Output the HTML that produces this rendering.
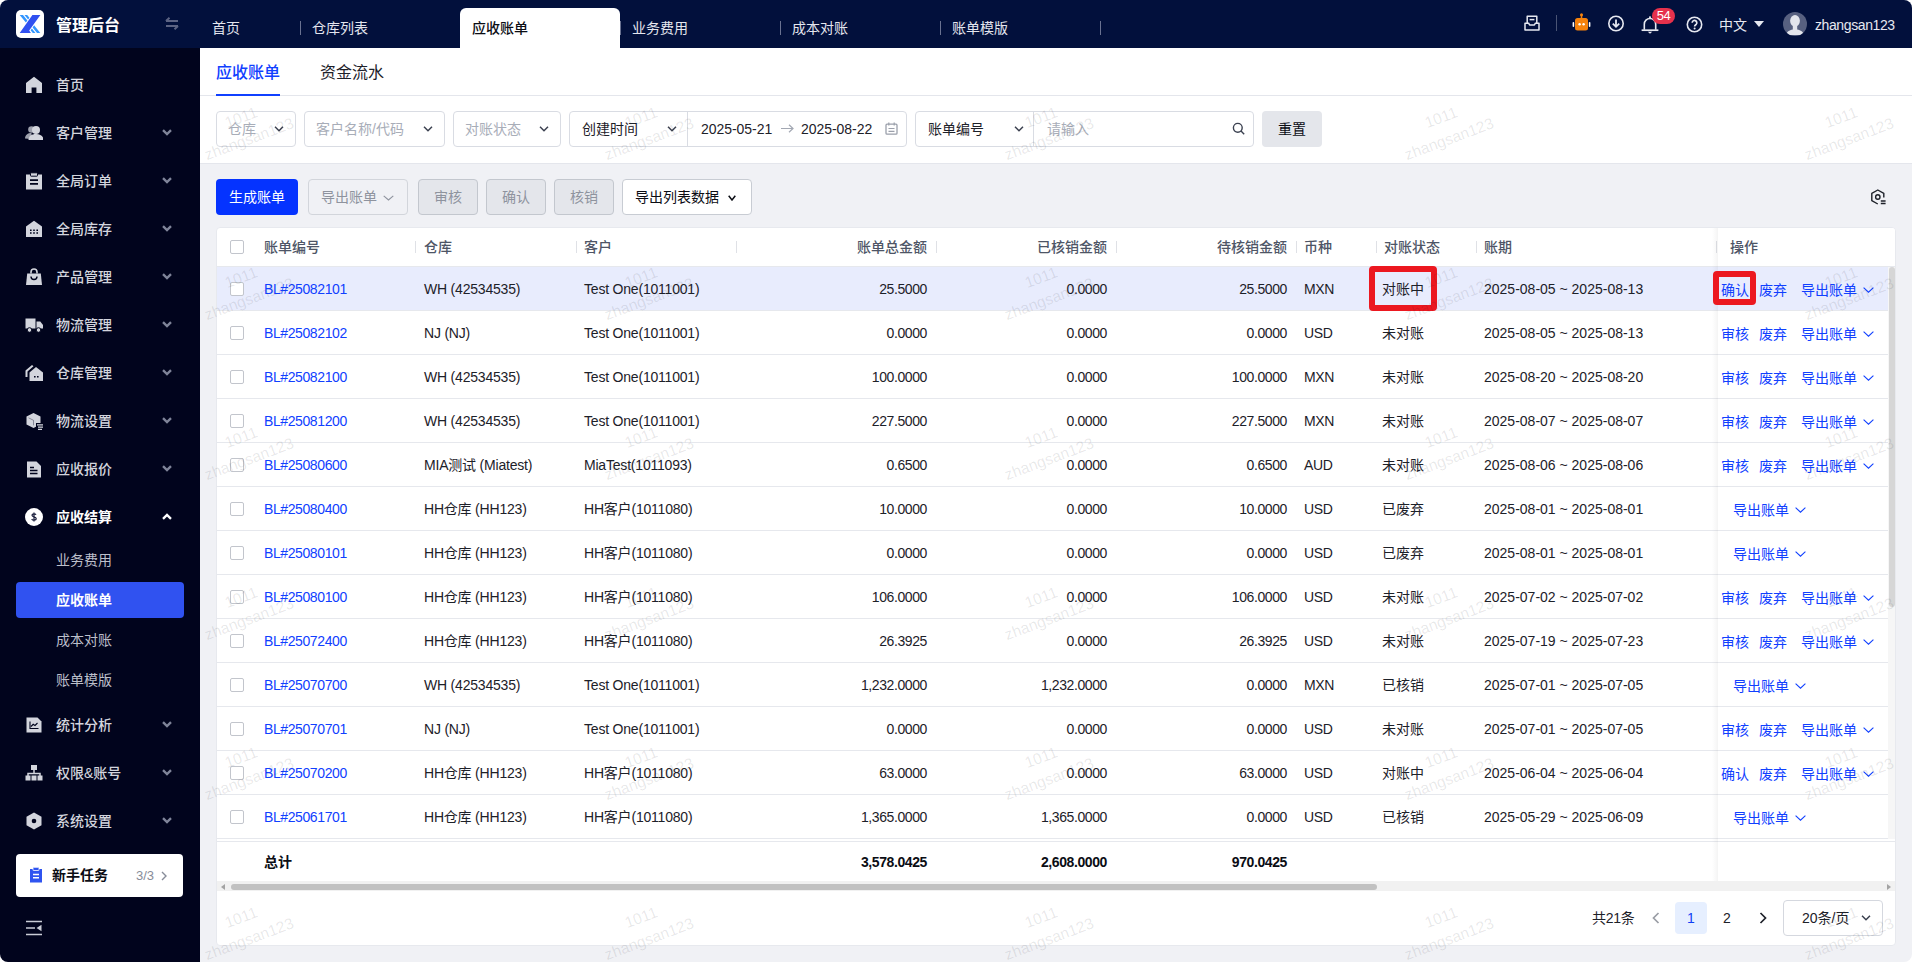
<!DOCTYPE html>
<html lang="zh-CN">
<head>
<meta charset="utf-8">
<title>应收账单</title>
<style>
*{box-sizing:border-box}
html,body{margin:0;padding:0;background:#fff}
body{width:1912px;height:962px;overflow:hidden}
#app{position:relative;width:1912px;height:962px;overflow:hidden;border-radius:8px;background:#f0f1f5;font-family:"Liberation Sans","Noto Sans CJK SC",sans-serif;font-size:14px;color:#1d2129;line-height:20px}
.abs{position:absolute}
svg{display:block}
/* header */
#hd{position:absolute;left:0;top:0;width:1912px;height:48px;background:#02103c}
#logo{position:absolute;left:16px;top:10px;width:28px;height:28px;border-radius:5px;background:#fff}
#brand{position:absolute;left:56px;top:15px;font-size:16px;font-weight:700;color:#fff;line-height:22px;letter-spacing:0}
.tab{position:absolute;top:8px;height:40px;line-height:40px;color:#e4e6ee;font-size:14px;padding-left:12px;white-space:nowrap}
.tab.on{background:#fff;color:#0b0d14;font-weight:500;border-radius:6px 6px 0 0}
.tsep{position:absolute;top:21px;width:1px;height:14px;background:#6a7291}
.hi{position:absolute;color:#e6e8f0}
/* sidebar */
#sb{position:absolute;left:0;top:48px;width:200px;height:914px;background:#01041d}
.mi{position:absolute;left:0;width:200px;height:48px;color:#d3d5dd;font-weight:500;font-size:14px}
.mi .tx{position:absolute;left:56px;top:14px;line-height:20px}
.mi .ic{position:absolute;left:25px;top:15px;width:18px;height:18px;color:#d3d5dd}
.mi .ar{position:absolute;left:162px;top:20px;color:#7f8499}
.mi.open{color:#fff;font-weight:700}
.mi.open .ar{color:#fff}
.si{position:absolute;left:16px;width:168px;height:36px;border-radius:4px;color:#bcbfca;font-weight:400}
.si .tx{position:absolute;left:40px;top:8px;line-height:20px}
.si.on{background:#3052f0;color:#fff;font-weight:700}
/* content */
#top{position:absolute;left:200px;top:48px;width:1712px;height:116px;background:#fff;border-bottom:1px solid #e4e6ec}
#top .line{position:absolute;left:0;top:47px;width:1712px;height:1px;background:#e4e6ec}
.st{position:absolute;top:14px;font-size:16px;line-height:22px;color:#1d2129}
.st.on{color:#1040ff;font-weight:500}
.sel{position:absolute;top:63px;height:36px;border:1px solid #d9dce3;border-radius:4px;background:#fff;line-height:35px;white-space:nowrap}
.ph{color:#a8adb8}
.btn{position:absolute;top:179px;height:36px;border-radius:4px;line-height:34px;text-align:center;white-space:nowrap;border:1px solid transparent}
/* table */
#card{position:absolute;left:216px;top:227px;width:1680px;height:719px;background:#fff;border-radius:4px;border:1px solid #e7e9ee}
#ci{position:absolute;left:0;top:0;width:1678px;height:717px;overflow:hidden;border-radius:3px}
.th{position:absolute;top:0;height:38px;line-height:38px;color:#4e5566;font-weight:500;white-space:nowrap}
.vs{position:absolute;top:13px;width:1px;height:12px;background:#dfe1e6}
.tr{position:absolute;left:0;width:1671px;height:44px;border-bottom:1px solid #e6e8ed;line-height:45px;white-space:nowrap}
.sum{background:#fff;font-weight:700;line-height:40px;color:#0b0d14}
.tr.hl{background:#e8ecfd}
.cb{position:absolute;left:13px;top:15px;width:14px;height:14px;border:1px solid #c2c5cc;border-radius:2px;background:#fff}
.c{position:absolute;top:0;letter-spacing:-0.4px}
.c.r{text-align:right}
.c1{left:47px}.c2{left:207px;letter-spacing:-.2px}.c3{left:367px;letter-spacing:-.2px}
.c4{left:519px;width:191px}.c5{left:719px;width:171px}.c6{left:899px;width:171px}
.c7{left:1087px}.c8{left:1165px;letter-spacing:0}.c9{left:1267px;letter-spacing:0}
.lk{color:#1040ff}
.op{position:absolute;left:1501px;top:0;width:170px;height:43px;background:#fff}
.hl .op{background:#e8ecfd}
.op .lk{position:absolute;top:1px}
.l1{left:3px}.l2{left:41px}.ex{left:83px}.ex.solo{left:15px}
.chv{display:inline-block;vertical-align:middle;margin-left:6px;margin-top:-3px}
.wm{position:absolute;width:160px;text-align:center;font-size:15.6px;line-height:23px;color:rgba(20,25,40,.1);transform:rotate(-20.5deg);pointer-events:none;white-space:nowrap}
</style>
</head>
<body>
<div id="app">

<!-- ================= HEADER ================= -->
<div id="hd">
  <div id="logo"><svg width="28" height="28" viewBox="0 0 28 28"><path d="M16.400 5H24.400L13.200 20.600L14.900 22.900H3.700z" fill="#3050f0"/><path d="M3.700 5H7L11.400 10.500L9.900 12.600zM8.500 5H11.200L13.400 7.700L12.100 9.500z" fill="#3296ff"/><path d="M24.300 22.900H21L16.600 17.400L18.100 15.300zM19.500 22.900H16.800L14.600 20.200L15.900 18.400z" fill="#3296ff"/></svg></div>
  <div id="brand">管理后台</div>
  <svg class="abs" style="left:165px;top:17px" width="14" height="13" viewBox="0 0 14 13"><path d="M1 4h12M1 4l3.5-3.2M13 9H1M13 9l-3.5 3.2" fill="none" stroke="#5c6383" stroke-width="2"/></svg>
  <div class="tab" style="left:200px;width:100px">首页</div>
  <div class="tsep" style="left:300px"></div>
  <div class="tab" style="left:300px;width:160px">仓库列表</div>
  <div class="tab on" style="left:460px;width:160px">应收账单</div>
  <div class="tsep" style="left:620px"></div>
  <div class="tab" style="left:620px;width:160px">业务费用</div>
  <div class="tsep" style="left:780px"></div>
  <div class="tab" style="left:780px;width:160px">成本对账</div>
  <div class="tsep" style="left:940px"></div>
  <div class="tab" style="left:940px;width:160px">账单模版</div>
  <div class="tsep" style="left:1100px"></div>
  <!-- right icons -->
  <svg class="hi" style="left:1524px;top:15px" width="16" height="16" viewBox="0 0 16 16"><path d="M3.2 8V1.2h9.6V8M1 8.2h3.6l1 1.8h4.8l1-1.8H15V15H1z" fill="none" stroke="currentColor" stroke-width="1.5" stroke-linejoin="round"/><path d="M5.6 4.6h4.8" stroke="currentColor" stroke-width="1.5"/></svg>
  <div class="abs" style="left:1556px;top:15px;width:1px;height:16px;background:#4a5474"></div>
  <svg class="abs" style="left:1572px;top:13px" width="19" height="19" viewBox="0 0 19 19"><rect x="8.7" y="1" width="1.6" height="4" fill="#f6820c"/><circle cx="9.5" cy="1.8" r="1.5" fill="#f6820c"/><rect x="3" y="5" width="13" height="12.5" rx="2.5" fill="#f6820c"/><rect x="0.6" y="9" width="1.6" height="5" rx=".8" fill="#fff"/><rect x="16.8" y="9" width="1.6" height="5" rx=".8" fill="#fff"/><circle cx="7.600" cy="11.200" r="1.200" fill="#fff"/><circle cx="11.600" cy="11.200" r="1.200" fill="#fff"/></svg>
  <svg class="hi" style="left:1607px;top:15px" width="18" height="18" viewBox="0 0 18 18"><circle cx="9" cy="8.5" r="7.2" fill="none" stroke="currentColor" stroke-width="1.6"/><path d="M9 4.5v7M5.8 8.6L9 11.8l3.2-3.2" fill="none" stroke="currentColor" stroke-width="1.8"/></svg>
  <svg class="hi" style="left:1641px;top:15px" width="18" height="20" viewBox="0 0 18 20"><path d="M3.300 14.800V9.200a5.700 5.700 0 0111.400 0v5.600" fill="none" stroke="currentColor" stroke-width="1.600"/><path d="M.6 15.200h16.800" stroke="currentColor" stroke-width="1.700"/><circle cx="9" cy="2.300" r="1.100" fill="currentColor"/><path d="M6.800 16.800h4.400L9 18.800z" fill="currentColor"/></svg>
  <div class="abs" style="left:1652px;top:8px;width:23px;height:16px;border-radius:8px;background:#e6314c;color:#fff;font-size:13px;line-height:16px;text-align:center;letter-spacing:-.4px">54</div>
  <svg class="hi" style="left:1686px;top:16px" width="17" height="17" viewBox="0 0 17 17"><circle cx="8.5" cy="8.5" r="7.2" fill="none" stroke="currentColor" stroke-width="1.6"/><path d="M6.2 6.8a2.3 2.3 0 114 1.5c-.8.7-1.6 1-1.6 2.1" fill="none" stroke="currentColor" stroke-width="1.7"/><circle cx="8.6" cy="12.4" r="1" fill="currentColor"/></svg>
  <div class="hi" style="left:1719px;top:15px;line-height:20px">中文</div>
  <svg class="hi" style="left:1754px;top:21px" width="10" height="6" viewBox="0 0 10 6"><path d="M0 0h10L5 6z" fill="currentColor"/></svg>
  <svg class="abs" style="left:1783px;top:12px" width="24" height="24" viewBox="0 0 24 24"><defs><clipPath id="av"><circle cx="12" cy="12" r="12"/></clipPath></defs><circle cx="12" cy="12" r="12" fill="#576080"/><g clip-path="url(#av)" fill="#e3e5ec"><ellipse cx="12" cy="8.800" rx="4.900" ry="5.800"/><path d="M3.200 23c.4-3.300 3-4.800 6.600-5.600v-3.400h4.400v3.400c3.600.8 6.200 2.300 6.600 5.600z"/></g></svg>
  <div class="hi" style="left:1815px;top:15px;line-height:20px;letter-spacing:-0.4px">zhangsan123</div>
</div>

<!-- ================= SIDEBAR ================= -->
<div id="sb">
<div class="mi" style="top:13px"><svg class="ic" width="18" height="18" viewBox="0 0 18 18"><path d="M9 .8L1 7v10h5.6v-5.4h4.800V17H17V7z" fill="currentColor"/></svg><span class="tx">首页</span></div>
<div class="mi" style="top:61px"><svg class="ic" width="18" height="18" viewBox="0 0 18 18"><circle cx="6.500" cy="5.500" r="3.300" fill="currentColor" opacity=".75"/><path d="M0 14.500c0-3.500 2.800-5.500 6.500-5.500v6z" fill="currentColor" opacity=".75"/><circle cx="11" cy="6" r="4" fill="currentColor"/><path d="M3.500 16c0-4 3.200-6 7.500-6s7.500 2 7.500 6z" fill="currentColor"/></svg><span class="tx">客户管理</span><svg class="ar" width="10" height="7" viewBox="0 0 10 7"><path d="M1 1.200l4 3.800 4-3.800" fill="none" stroke="currentColor" stroke-width="2.400"/></svg></div>
<div class="mi" style="top:109px"><svg class="ic" width="18" height="18" viewBox="0 0 18 18"><path d="M1 2.500h16V17.500H1z" fill="currentColor"/><rect x="5.500" y=".8" width="7" height="3.400" rx=".6" fill="currentColor" stroke="#01041d" stroke-width="1"/><path d="M5 8.200h8M5 11.800h8" stroke="#01041d" stroke-width="1.700"/></svg><span class="tx">全局订单</span><svg class="ar" width="10" height="7" viewBox="0 0 10 7"><path d="M1 1.200l4 3.800 4-3.800" fill="none" stroke="currentColor" stroke-width="2.400"/></svg></div>
<div class="mi" style="top:157px"><svg class="ic" width="18" height="18" viewBox="0 0 18 18"><path d="M9 .8L1 6.500V17h16V6.500z" fill="currentColor"/><path d="M5 10.200h1.600M8.200 10.200h1.600M11.400 10.200H13M5 13h1.600M8.200 13h1.600M11.400 13H13" stroke="#01041d" stroke-width="1.500"/></svg><span class="tx">全局库存</span><svg class="ar" width="10" height="7" viewBox="0 0 10 7"><path d="M1 1.200l4 3.800 4-3.800" fill="none" stroke="currentColor" stroke-width="2.400"/></svg></div>
<div class="mi" style="top:205px"><svg class="ic" width="18" height="18" viewBox="0 0 18 18"><path d="M2.200 5.500h13.600L17 17H1z" fill="currentColor"/><path d="M6 5.500V4a3 3 0 016 0v1.500" fill="none" stroke="currentColor" stroke-width="1.600"/><path d="M6 8.500a3 3 0 006 0" fill="none" stroke="#01041d" stroke-width="1.400"/></svg><span class="tx">产品管理</span><svg class="ar" width="10" height="7" viewBox="0 0 10 7"><path d="M1 1.200l4 3.800 4-3.800" fill="none" stroke="currentColor" stroke-width="2.400"/></svg></div>
<div class="mi" style="top:253px"><svg class="ic" width="18" height="18" viewBox="0 0 18 18"><path d="M.5 2.500h10v10H.5z" fill="currentColor"/><path d="M11.500 5.500h3.800L18 9v3.500h-6.500z" fill="currentColor"/><circle cx="4.500" cy="14" r="2.300" fill="currentColor" stroke="#01041d" stroke-width="1"/><circle cx="13.500" cy="14" r="2.300" fill="currentColor" stroke="#01041d" stroke-width="1"/></svg><span class="tx">物流管理</span><svg class="ar" width="10" height="7" viewBox="0 0 10 7"><path d="M1 1.200l4 3.800 4-3.800" fill="none" stroke="currentColor" stroke-width="2.400"/></svg></div>
<div class="mi" style="top:301px"><svg class="ic" width="18" height="18" viewBox="0 0 18 18"><path d="M7 1L.5 6.500V13h2V7.500L8.500 2.300z" fill="currentColor"/><path d="M11 3L4.500 8.500V17H18V8.500z" fill="currentColor"/><path d="M9 12.800h1.600M12 12.800h1.600" stroke="#01041d" stroke-width="1.600"/></svg><span class="tx">仓库管理</span><svg class="ar" width="10" height="7" viewBox="0 0 10 7"><path d="M1 1.200l4 3.800 4-3.800" fill="none" stroke="currentColor" stroke-width="2.400"/></svg></div>
<div class="mi" style="top:349px"><svg class="ic" width="18" height="18" viewBox="0 0 18 18"><path d="M8.500 1l7 3.500v8l-7 3.500-7-3.500v-8z" fill="currentColor"/><path d="M3.500 5.800l5 2.500v5" fill="none" stroke="#01041d" stroke-width=".6" opacity=".6"/><rect x="11" y="11" width="8" height="7" fill="#01041d"/><path d="M12 12.800h6M13 15.200h5M13 17.400h4" stroke="currentColor" stroke-width="1.300"/></svg><span class="tx">物流设置</span><svg class="ar" width="10" height="7" viewBox="0 0 10 7"><path d="M1 1.200l4 3.800 4-3.800" fill="none" stroke="currentColor" stroke-width="2.400"/></svg></div>
<div class="mi" style="top:397px"><svg class="ic" width="18" height="18" viewBox="0 0 18 18"><path d="M2 1.500h9.500L16 6v11.500H2z" fill="currentColor"/><path d="M5 7.500h4M5 10.500h7.500M5 13.500h7.500" stroke="#01041d" stroke-width="1.500"/></svg><span class="tx">应收报价</span><svg class="ar" width="10" height="7" viewBox="0 0 10 7"><path d="M1 1.200l4 3.800 4-3.800" fill="none" stroke="currentColor" stroke-width="2.400"/></svg></div>
<div class="mi open" style="top:445px"><svg class="ic" width="18" height="18" viewBox="0 0 18 18"><circle cx="9" cy="9" r="9" fill="#fff"/><path d="M11 6.800c-.4-.7-1.100-1-2-1-1.200 0-2 .6-2 1.500 0 2 4.200 1 4.200 3.200 0 1-.9 1.600-2.200 1.600-1 0-1.900-.4-2.300-1.200M9 4.500v9" fill="none" stroke="#1a1e3c" stroke-width="1.200"/></svg><span class="tx">应收结算</span><svg class="ar" width="10" height="7" viewBox="0 0 10 7"><path d="M1 5.800l4-3.800 4 3.800" fill="none" stroke="currentColor" stroke-width="2.400"/></svg></div>
<div class="mi" style="top:653px"><svg class="ic" width="18" height="18" viewBox="0 0 18 18"><path d="M1.500 1.500h11L16.500 5.500v11h-15z" fill="currentColor"/><path d="M5 5.500v7h8.500M6 10.500l2.200-2.200 1.800 1.200 2.500-2.500" fill="none" stroke="#01041d" stroke-width="1.100"/></svg><span class="tx">统计分析</span><svg class="ar" width="10" height="7" viewBox="0 0 10 7"><path d="M1 1.200l4 3.800 4-3.800" fill="none" stroke="currentColor" stroke-width="2.400"/></svg></div>
<div class="mi" style="top:701px"><svg class="ic" width="18" height="18" viewBox="0 0 18 18"><rect x="6" y="1" width="6" height="5" fill="currentColor"/><path d="M9 6v3.500M3 12V9.500h12V12" fill="none" stroke="currentColor" stroke-width="1.500"/><rect x=".5" y="11.500" width="5" height="5" fill="currentColor"/><rect x="6.500" y="11.500" width="5" height="5" fill="currentColor"/><rect x="12.500" y="11.500" width="5" height="5" fill="currentColor"/></svg><span class="tx">权限&amp;账号</span><svg class="ar" width="10" height="7" viewBox="0 0 10 7"><path d="M1 1.200l4 3.800 4-3.800" fill="none" stroke="currentColor" stroke-width="2.400"/></svg></div>
<div class="mi" style="top:749px"><svg class="ic" width="18" height="18" viewBox="0 0 18 18"><path d="M9 .5l7.500 4.200v8.600L9 17.500 1.500 13.300V4.700z" fill="currentColor"/><circle cx="9" cy="9" r="2.300" fill="#01041d"/></svg><span class="tx">系统设置</span><svg class="ar" width="10" height="7" viewBox="0 0 10 7"><path d="M1 1.200l4 3.800 4-3.800" fill="none" stroke="currentColor" stroke-width="2.400"/></svg></div>
<div class="si" style="top:494px"><span class="tx">业务费用</span></div>
<div class="si on" style="top:534px"><span class="tx">应收账单</span></div>
<div class="si" style="top:574px"><span class="tx">成本对账</span></div>
<div class="si" style="top:614px"><span class="tx">账单模版</span></div>
<div class="abs" style="left:16px;top:806px;width:167px;height:43px;border-radius:4px;background:#fff">
<svg class="abs" style="left:13px;top:13px" width="14" height="16" viewBox="0 0 14 16"><path d="M1 2h12v13.500H1z" fill="#2f54f0"/><rect x="4" y=".3" width="6" height="3.200" rx=".5" fill="#2f54f0" stroke="#fff" stroke-width=".8"/><path d="M4 7.500h6M4 10.800h6" stroke="#fff" stroke-width="1.500"/></svg>
<span class="abs" style="left:36px;top:11px;font-weight:700;color:#0b0d14;line-height:20px">新手任务</span>
<span class="abs" style="left:120px;top:12px;color:#878c99;font-size:13px;line-height:20px">3/3</span>
<svg class="abs" style="left:145px;top:17px" width="6" height="10" viewBox="0 0 6 10"><path d="M1 1l4 4-4 4" fill="none" stroke="#878c99" stroke-width="1.400"/></svg>
</div>
<svg class="abs" style="left:26px;top:872px" width="16" height="16" viewBox="0 0 16 16"><path d="M0 1.500h16M0 8h9M0 14.500h16" stroke="#c9ccd6" stroke-width="1.700"/><path d="M15.500 4.800v6.400L10.500 8z" fill="#c9ccd6"/></svg>
</div>

<!-- ================= TOP PANEL ================= -->
<div id="top">
  <div class="st on" style="left:16px">应收账单</div>
  <div class="abs" style="left:16px;top:46px;width:64px;height:2px;background:#1040ff;z-index:2"></div>
  <div class="st" style="left:120px">资金流水</div>
  <div class="line"></div>

  <div class="sel" style="left:16px;width:80px"><span class="abs ph" style="left:11px">仓库</span><svg class="abs" style="right:11px;top:14px" width="10" height="6" viewBox="0 0 10 6"><path d="M1 .8l4 4 4-4" fill="none" stroke="#3b4150" stroke-width="1.500"/></svg></div>
  <div class="sel" style="left:104px;width:141px"><span class="abs ph" style="left:11px">客户名称/代码</span><svg class="abs" style="right:11px;top:14px" width="10" height="6" viewBox="0 0 10 6"><path d="M1 .8l4 4 4-4" fill="none" stroke="#3b4150" stroke-width="1.500"/></svg></div>
  <div class="sel" style="left:253px;width:108px"><span class="abs ph" style="left:11px">对账状态</span><svg class="abs" style="right:11px;top:14px" width="10" height="6" viewBox="0 0 10 6"><path d="M1 .8l4 4 4-4" fill="none" stroke="#3b4150" stroke-width="1.500"/></svg></div>
  <div class="sel" style="left:369px;width:338px"><span class="abs" style="left:12px">创建时间</span><svg class="abs" style="right:229px;top:14px" width="10" height="6" viewBox="0 0 10 6"><path d="M1 .8l4 4 4-4" fill="none" stroke="#3b4150" stroke-width="1.500"/></svg>
    <div class="abs" style="left:117px;top:0;width:1px;height:34px;background:#d9dce3"></div>
    <span class="abs" style="left:131px;letter-spacing:-.05px">2025-05-21</span>
    <svg class="abs" style="left:211px;top:12px" width="13" height="9" viewBox="0 0 13 9"><path d="M0 4.500h12M8 .8l4 3.700-4 3.700" fill="none" stroke="#a3a8b3" stroke-width="1.200"/></svg>
    <span class="abs" style="left:231px;letter-spacing:-.05px">2025-08-22</span>
    <svg class="abs" style="left:315px;top:10px" width="13" height="13" viewBox="0 0 13 13"><rect x="1" y="2.200" width="11" height="10" rx="1" fill="none" stroke="#9ba0ab" stroke-width="1.300"/><path d="M3.800 .5v3M9.200 .5v3M3.500 6.500h6M3.500 9.300h6" stroke="#9ba0ab" stroke-width="1.200"/></svg>
  </div>
  <div class="sel" style="left:715px;width:339px"><span class="abs" style="left:12px">账单编号</span><svg class="abs" style="right:229px;top:14px" width="10" height="6" viewBox="0 0 10 6"><path d="M1 .8l4 4 4-4" fill="none" stroke="#3b4150" stroke-width="1.500"/></svg>
    <div class="abs" style="left:117px;top:0;width:1px;height:34px;background:#d9dce3"></div>
    <span class="abs ph" style="left:131px">请输入</span>
    <svg class="abs" style="left:316px;top:10px" width="13" height="13" viewBox="0 0 13 13"><circle cx="5.800" cy="5.800" r="4.400" fill="none" stroke="#3b4150" stroke-width="1.400"/><path d="M9 9l3.200 3.200" stroke="#3b4150" stroke-width="1.400"/></svg>
  </div>
  <div class="abs" style="left:1062px;top:63px;width:60px;height:36px;border-radius:4px;background:#e4e6eb;line-height:37px;text-align:center;color:#0b0d14">重置</div>

</div>


<div class="btn" style="left:216px;width:82px;background:#0533ff;color:#fff">生成账单</div>
<div class="btn" style="left:308px;width:100px;background:#f0f1f5;border-color:#d2d5db;color:#8e939e;text-align:left;padding-left:12px">导出账单<svg style="display:inline-block;vertical-align:middle;margin-left:6px;margin-top:-1px" width="11" height="6" viewBox="0 0 11 6"><path d="M.7 .8L5.500 5 10.300 .8" fill="none" stroke="#8e939e" stroke-width="1.100"/></svg></div>
<div class="btn" style="left:418px;width:60px;background:#e4e6eb;border-color:#c3c7ce;color:#8e939e">审核</div>
<div class="btn" style="left:486px;width:60px;background:#e4e6eb;border-color:#c3c7ce;color:#8e939e">确认</div>
<div class="btn" style="left:554px;width:60px;background:#e4e6eb;border-color:#c3c7ce;color:#8e939e">核销</div>
<div class="btn" style="left:622px;width:130px;background:#fff;border-color:#c8ccd3;color:#0b0d14;text-align:left;padding-left:12px">导出列表数据<svg style="display:inline-block;vertical-align:middle;margin-left:9px;margin-top:-1px" width="8" height="6" viewBox="0 0 8 6"><path d="M.7 .8L4 5 7.300 .8" fill="none" stroke="#0b0d14" stroke-width="1.500"/></svg></div>
<svg class="abs" style="left:1870px;top:189px" width="17" height="17" viewBox="0 0 17 17"><path d="M13.800 8.500V4.300L7.800 1 1.800 4.300v7.400l6 3.300" fill="none" stroke="#1d2129" stroke-width="1.400" stroke-linejoin="round"/><circle cx="7.800" cy="8" r="2.200" fill="none" stroke="#1d2129" stroke-width="1.400"/><path d="M10.800 11.900h4.800M10.800 14.500h4.800" stroke="#1d2129" stroke-width="1.500"/></svg>


<!-- ================= TABLE ================= -->
<div id="card"><div id="ci">
<span class="cb" style="left:13px;top:12px"></span>
<span class="th" style="left:47px">账单编号</span>
<span class="th" style="left:207px">仓库</span>
<span class="th" style="left:367px">客户</span>
<span class="th" style="right:968px">账单总金额</span>
<span class="th" style="right:788px">已核销金额</span>
<span class="th" style="right:608px">待核销金额</span>
<span class="th" style="left:1087px">币种</span>
<span class="th" style="left:1167px">对账状态</span>
<span class="th" style="left:1267px">账期</span>
<span class="vs" style="left:198px"></span>
<span class="vs" style="left:359px"></span>
<span class="vs" style="left:519px"></span>
<span class="vs" style="left:719px"></span>
<span class="vs" style="left:899px"></span>
<span class="vs" style="left:1079px"></span>
<span class="vs" style="left:1159px"></span>
<span class="vs" style="left:1259px"></span>
<div class="abs" style="left:0;top:38px;width:1678px;height:1px;background:#e6e8ed"></div>
<div class="abs" style="left:1501px;top:0;width:177px;height:38px;background:#fff"><span class="vs" style="left:-2px"></span><span class="th" style="left:12px">操作</span></div>
<div class="tr hl" style="top:39px"><span class="cb"></span><span class="c c1 lk">BL#25082101</span><span class="c c2">WH (42534535)</span><span class="c c3">Test One(1011001)</span><span class="c r c4">25.5000</span><span class="c r c5">0.0000</span><span class="c r c6">25.5000</span><span class="c c7">MXN</span><span class="c c8">对账中</span><span class="c c9">2025-08-05 ~ 2025-08-13</span><span class="op"><span class="lk l1">确认</span><span class="lk l2">废弃</span><span class="lk ex">导出账单<svg class="chv" width="11" height="6" viewBox="0 0 11 6"><path d="M.6 .6l4.900 4.600L10.400 .6" fill="none" stroke="currentColor" stroke-width="1.100"/></svg></span></span></div>
<div class="tr" style="top:83px"><span class="cb"></span><span class="c c1 lk">BL#25082102</span><span class="c c2">NJ (NJ)</span><span class="c c3">Test One(1011001)</span><span class="c r c4">0.0000</span><span class="c r c5">0.0000</span><span class="c r c6">0.0000</span><span class="c c7">USD</span><span class="c c8">未对账</span><span class="c c9">2025-08-05 ~ 2025-08-13</span><span class="op"><span class="lk l1">审核</span><span class="lk l2">废弃</span><span class="lk ex">导出账单<svg class="chv" width="11" height="6" viewBox="0 0 11 6"><path d="M.6 .6l4.900 4.600L10.400 .6" fill="none" stroke="currentColor" stroke-width="1.100"/></svg></span></span></div>
<div class="tr" style="top:127px"><span class="cb"></span><span class="c c1 lk">BL#25082100</span><span class="c c2">WH (42534535)</span><span class="c c3">Test One(1011001)</span><span class="c r c4">100.0000</span><span class="c r c5">0.0000</span><span class="c r c6">100.0000</span><span class="c c7">MXN</span><span class="c c8">未对账</span><span class="c c9">2025-08-20 ~ 2025-08-20</span><span class="op"><span class="lk l1">审核</span><span class="lk l2">废弃</span><span class="lk ex">导出账单<svg class="chv" width="11" height="6" viewBox="0 0 11 6"><path d="M.6 .6l4.900 4.600L10.400 .6" fill="none" stroke="currentColor" stroke-width="1.100"/></svg></span></span></div>
<div class="tr" style="top:171px"><span class="cb"></span><span class="c c1 lk">BL#25081200</span><span class="c c2">WH (42534535)</span><span class="c c3">Test One(1011001)</span><span class="c r c4">227.5000</span><span class="c r c5">0.0000</span><span class="c r c6">227.5000</span><span class="c c7">MXN</span><span class="c c8">未对账</span><span class="c c9">2025-08-07 ~ 2025-08-07</span><span class="op"><span class="lk l1">审核</span><span class="lk l2">废弃</span><span class="lk ex">导出账单<svg class="chv" width="11" height="6" viewBox="0 0 11 6"><path d="M.6 .6l4.900 4.600L10.400 .6" fill="none" stroke="currentColor" stroke-width="1.100"/></svg></span></span></div>
<div class="tr" style="top:215px"><span class="cb"></span><span class="c c1 lk">BL#25080600</span><span class="c c2">MIA测试 (Miatest)</span><span class="c c3">MiaTest(1011093)</span><span class="c r c4">0.6500</span><span class="c r c5">0.0000</span><span class="c r c6">0.6500</span><span class="c c7">AUD</span><span class="c c8">未对账</span><span class="c c9">2025-08-06 ~ 2025-08-06</span><span class="op"><span class="lk l1">审核</span><span class="lk l2">废弃</span><span class="lk ex">导出账单<svg class="chv" width="11" height="6" viewBox="0 0 11 6"><path d="M.6 .6l4.900 4.600L10.400 .6" fill="none" stroke="currentColor" stroke-width="1.100"/></svg></span></span></div>
<div class="tr" style="top:259px"><span class="cb"></span><span class="c c1 lk">BL#25080400</span><span class="c c2">HH仓库 (HH123)</span><span class="c c3">HH客户(1011080)</span><span class="c r c4">10.0000</span><span class="c r c5">0.0000</span><span class="c r c6">10.0000</span><span class="c c7">USD</span><span class="c c8">已废弃</span><span class="c c9">2025-08-01 ~ 2025-08-01</span><span class="op"><span class="lk ex solo">导出账单<svg class="chv" width="11" height="6" viewBox="0 0 11 6"><path d="M.6 .6l4.900 4.600L10.400 .6" fill="none" stroke="currentColor" stroke-width="1.100"/></svg></span></span></div>
<div class="tr" style="top:303px"><span class="cb"></span><span class="c c1 lk">BL#25080101</span><span class="c c2">HH仓库 (HH123)</span><span class="c c3">HH客户(1011080)</span><span class="c r c4">0.0000</span><span class="c r c5">0.0000</span><span class="c r c6">0.0000</span><span class="c c7">USD</span><span class="c c8">已废弃</span><span class="c c9">2025-08-01 ~ 2025-08-01</span><span class="op"><span class="lk ex solo">导出账单<svg class="chv" width="11" height="6" viewBox="0 0 11 6"><path d="M.6 .6l4.900 4.600L10.400 .6" fill="none" stroke="currentColor" stroke-width="1.100"/></svg></span></span></div>
<div class="tr" style="top:347px"><span class="cb"></span><span class="c c1 lk">BL#25080100</span><span class="c c2">HH仓库 (HH123)</span><span class="c c3">HH客户(1011080)</span><span class="c r c4">106.0000</span><span class="c r c5">0.0000</span><span class="c r c6">106.0000</span><span class="c c7">USD</span><span class="c c8">未对账</span><span class="c c9">2025-07-02 ~ 2025-07-02</span><span class="op"><span class="lk l1">审核</span><span class="lk l2">废弃</span><span class="lk ex">导出账单<svg class="chv" width="11" height="6" viewBox="0 0 11 6"><path d="M.6 .6l4.900 4.600L10.400 .6" fill="none" stroke="currentColor" stroke-width="1.100"/></svg></span></span></div>
<div class="tr" style="top:391px"><span class="cb"></span><span class="c c1 lk">BL#25072400</span><span class="c c2">HH仓库 (HH123)</span><span class="c c3">HH客户(1011080)</span><span class="c r c4">26.3925</span><span class="c r c5">0.0000</span><span class="c r c6">26.3925</span><span class="c c7">USD</span><span class="c c8">未对账</span><span class="c c9">2025-07-19 ~ 2025-07-23</span><span class="op"><span class="lk l1">审核</span><span class="lk l2">废弃</span><span class="lk ex">导出账单<svg class="chv" width="11" height="6" viewBox="0 0 11 6"><path d="M.6 .6l4.900 4.600L10.400 .6" fill="none" stroke="currentColor" stroke-width="1.100"/></svg></span></span></div>
<div class="tr" style="top:435px"><span class="cb"></span><span class="c c1 lk">BL#25070700</span><span class="c c2">WH (42534535)</span><span class="c c3">Test One(1011001)</span><span class="c r c4">1,232.0000</span><span class="c r c5">1,232.0000</span><span class="c r c6">0.0000</span><span class="c c7">MXN</span><span class="c c8">已核销</span><span class="c c9">2025-07-01 ~ 2025-07-05</span><span class="op"><span class="lk ex solo">导出账单<svg class="chv" width="11" height="6" viewBox="0 0 11 6"><path d="M.6 .6l4.900 4.600L10.400 .6" fill="none" stroke="currentColor" stroke-width="1.100"/></svg></span></span></div>
<div class="tr" style="top:479px"><span class="cb"></span><span class="c c1 lk">BL#25070701</span><span class="c c2">NJ (NJ)</span><span class="c c3">Test One(1011001)</span><span class="c r c4">0.0000</span><span class="c r c5">0.0000</span><span class="c r c6">0.0000</span><span class="c c7">USD</span><span class="c c8">未对账</span><span class="c c9">2025-07-01 ~ 2025-07-05</span><span class="op"><span class="lk l1">审核</span><span class="lk l2">废弃</span><span class="lk ex">导出账单<svg class="chv" width="11" height="6" viewBox="0 0 11 6"><path d="M.6 .6l4.900 4.600L10.400 .6" fill="none" stroke="currentColor" stroke-width="1.100"/></svg></span></span></div>
<div class="tr" style="top:523px"><span class="cb"></span><span class="c c1 lk">BL#25070200</span><span class="c c2">HH仓库 (HH123)</span><span class="c c3">HH客户(1011080)</span><span class="c r c4">63.0000</span><span class="c r c5">0.0000</span><span class="c r c6">63.0000</span><span class="c c7">USD</span><span class="c c8">对账中</span><span class="c c9">2025-06-04 ~ 2025-06-04</span><span class="op"><span class="lk l1">确认</span><span class="lk l2">废弃</span><span class="lk ex">导出账单<svg class="chv" width="11" height="6" viewBox="0 0 11 6"><path d="M.6 .6l4.900 4.600L10.400 .6" fill="none" stroke="currentColor" stroke-width="1.100"/></svg></span></span></div>
<div class="tr" style="top:567px"><span class="cb"></span><span class="c c1 lk">BL#25061701</span><span class="c c2">HH仓库 (HH123)</span><span class="c c3">HH客户(1011080)</span><span class="c r c4">1,365.0000</span><span class="c r c5">1,365.0000</span><span class="c r c6">0.0000</span><span class="c c7">USD</span><span class="c c8">已核销</span><span class="c c9">2025-05-29 ~ 2025-06-09</span><span class="op"><span class="lk ex solo">导出账单<svg class="chv" width="11" height="6" viewBox="0 0 11 6"><path d="M.6 .6l4.900 4.600L10.400 .6" fill="none" stroke="currentColor" stroke-width="1.100"/></svg></span></span></div>

<div class="abs" style="left:0;top:613px;width:1678px;height:1px;background:#e6e8ed"></div>
<div class="abs sum" style="left:0;top:614px;width:1678px;height:39px">
<span class="abs" style="left:47px">总计</span>
<span class="c r c4">3,578.0425</span><span class="c r c5">2,608.0000</span><span class="c r c6">970.0425</span>
</div>
<div class="abs" style="left:1495px;top:0;width:6px;height:653px;background:linear-gradient(to right,rgba(0,0,0,0),rgba(0,0,0,.045))"></div>
<div class="abs" style="left:1501px;top:611px;width:177px;height:42px;background:#fff"></div>
<div class="abs" style="left:1501px;top:613px;width:177px;height:1px;background:#e6e8ed"></div>
<div class="abs" style="left:1671px;top:39px;width:7px;height:572px;background:#f6f6f6"></div>
<div class="abs" style="left:1672px;top:39px;width:6px;height:340px;background:#d6d6d6;border-radius:3px"></div>
<div class="abs" style="left:0;top:653px;width:1678px;height:10px;background:#f1f1f1"></div>
<div class="abs" style="left:14px;top:656px;width:1146px;height:6px;background:#c1c1c1;border-radius:3px"></div>
<svg class="abs" style="left:4px;top:656px" width="4" height="6" viewBox="0 0 4 6"><path d="M4 0v6L0 3z" fill="#a3a3a3"/></svg>
<svg class="abs" style="left:1670px;top:656px" width="4" height="6" viewBox="0 0 4 6"><path d="M0 0v6l4-3z" fill="#a3a3a3"/></svg>
<span class="abs" style="left:1375px;top:680px;line-height:20px;color:#1d2129;letter-spacing:-.3px">共21条</span>
<svg class="abs" style="left:1435px;top:684px" width="8" height="12" viewBox="0 0 8 12"><path d="M6.500 1L1.500 6l5 5" fill="none" stroke="#9a9da5" stroke-width="1.700"/></svg>
<div class="abs" style="left:1458px;top:674px;width:32px;height:32px;border-radius:4px;background:#e6efff;color:#1040f5;text-align:center;line-height:32px">1</div>
<div class="abs" style="left:1494px;top:674px;width:32px;height:32px;text-align:center;line-height:32px;color:#1d2129">2</div>
<svg class="abs" style="left:1542px;top:684px" width="8" height="12" viewBox="0 0 8 12"><path d="M1.500 1l5 5-5 5" fill="none" stroke="#1d2129" stroke-width="1.700"/></svg>
<div class="abs" style="left:1566px;top:672px;width:100px;height:36px;border:1px solid #d5d8df;border-radius:4px;background:#fff;line-height:34px"><span class="abs" style="left:18px;letter-spacing:0">20条/页</span><svg class="abs" style="right:11px;top:14px" width="10" height="6" viewBox="0 0 10 6"><path d="M1 .8l4 4 4-4" fill="none" stroke="#3b4150" stroke-width="1.500"/></svg></div>

</div></div>

<div class="abs" style="left:1369px;top:266px;width:68px;height:45px;border:6px solid #ec1820;border-radius:4px"></div>
<div class="abs" style="left:1713px;top:271px;width:43px;height:34px;border:6px solid #ec1820;border-radius:4px"></div>
<div class="wm" style="left:165px;top:105px">1011<br>zhangsan123</div>
<div class="wm" style="left:565px;top:105px">1011<br>zhangsan123</div>
<div class="wm" style="left:965px;top:105px">1011<br>zhangsan123</div>
<div class="wm" style="left:1365px;top:105px">1011<br>zhangsan123</div>
<div class="wm" style="left:1765px;top:105px">1011<br>zhangsan123</div>
<div class="wm" style="left:165px;top:265px">1011<br>zhangsan123</div>
<div class="wm" style="left:565px;top:265px">1011<br>zhangsan123</div>
<div class="wm" style="left:965px;top:265px">1011<br>zhangsan123</div>
<div class="wm" style="left:1365px;top:265px">1011<br>zhangsan123</div>
<div class="wm" style="left:1765px;top:265px">1011<br>zhangsan123</div>
<div class="wm" style="left:165px;top:425px">1011<br>zhangsan123</div>
<div class="wm" style="left:565px;top:425px">1011<br>zhangsan123</div>
<div class="wm" style="left:965px;top:425px">1011<br>zhangsan123</div>
<div class="wm" style="left:1365px;top:425px">1011<br>zhangsan123</div>
<div class="wm" style="left:1765px;top:425px">1011<br>zhangsan123</div>
<div class="wm" style="left:165px;top:585px">1011<br>zhangsan123</div>
<div class="wm" style="left:565px;top:585px">1011<br>zhangsan123</div>
<div class="wm" style="left:965px;top:585px">1011<br>zhangsan123</div>
<div class="wm" style="left:1365px;top:585px">1011<br>zhangsan123</div>
<div class="wm" style="left:1765px;top:585px">1011<br>zhangsan123</div>
<div class="wm" style="left:165px;top:745px">1011<br>zhangsan123</div>
<div class="wm" style="left:565px;top:745px">1011<br>zhangsan123</div>
<div class="wm" style="left:965px;top:745px">1011<br>zhangsan123</div>
<div class="wm" style="left:1365px;top:745px">1011<br>zhangsan123</div>
<div class="wm" style="left:1765px;top:745px">1011<br>zhangsan123</div>
<div class="wm" style="left:165px;top:905px">1011<br>zhangsan123</div>
<div class="wm" style="left:565px;top:905px">1011<br>zhangsan123</div>
<div class="wm" style="left:965px;top:905px">1011<br>zhangsan123</div>
<div class="wm" style="left:1365px;top:905px">1011<br>zhangsan123</div>
<div class="wm" style="left:1765px;top:905px">1011<br>zhangsan123</div>
</div>
</body>
</html>
